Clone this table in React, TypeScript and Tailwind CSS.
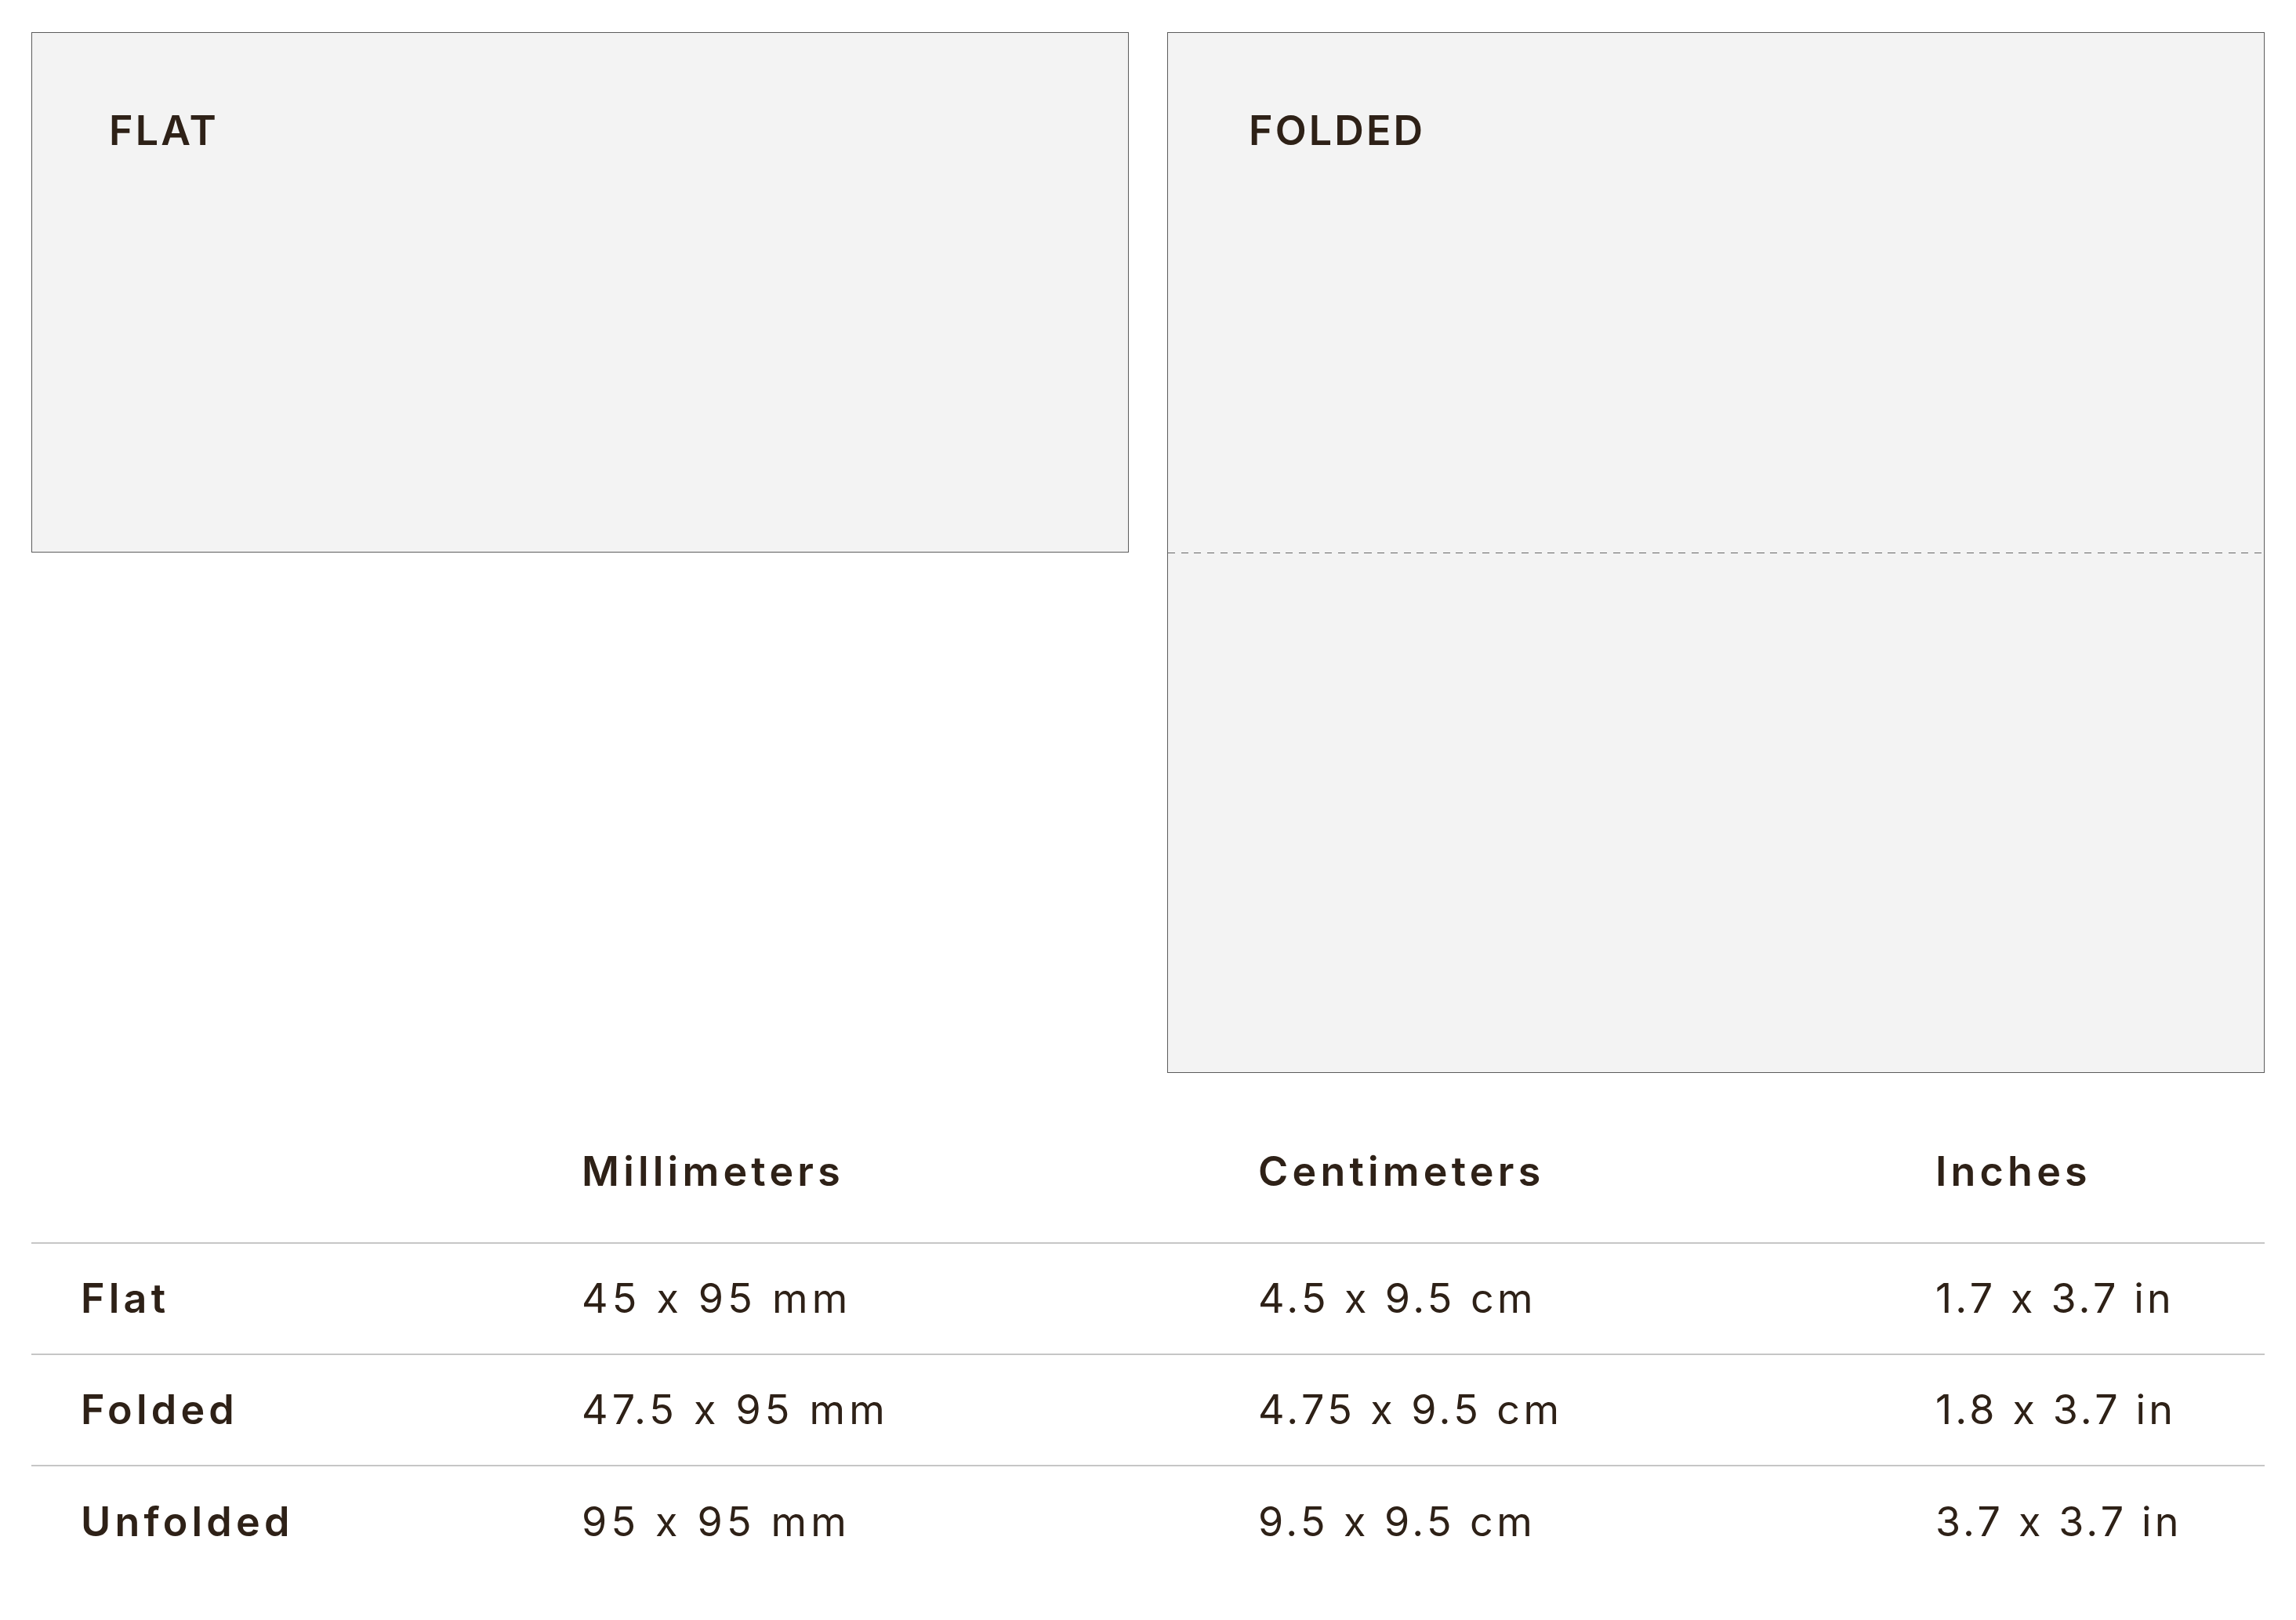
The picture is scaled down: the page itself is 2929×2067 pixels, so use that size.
const rows = [
  { label: "Flat", mm: "45 x 95 mm", cm: "4.5 x 9.5 cm", inch: "1.7 x 3.7 in" },
  { label: "Folded", mm: "47.5 x 95 mm", cm: "4.75 x 9.5 cm", inch: "1.8 x 3.7 in" },
  { label: "Unfolded", mm: "95 x 95 mm", cm: "9.5 x 9.5 cm", inch: "3.7 x 3.7 in" },
]

const cols = "grid grid-cols-[639px_863px_864px_1fr]"

export default function App() {
  return (
    <div className="min-h-screen bg-white px-[40px] pt-[41px] text-[#2e2117] [font-family:Inter,'Noto_Sans',sans-serif]">
      <div className="grid grid-cols-2 items-start gap-[49px]">
        <div className="h-[664px] border border-[#5c5c5c] bg-[#f3f3f3] px-[98px] pt-[99px]">
          <h2 className="text-[52px] font-semibold leading-none tracking-[0.06em]">FLAT</h2>
        </div>
        <div className="flex h-[1328px] flex-col border border-[#5c5c5c] bg-[#f3f3f3]">
          <div className="h-[663px] px-[103px] pt-[99px]">
            <h2 className="text-[52px] font-semibold leading-none tracking-[0.06em]">FOLDED</h2>
          </div>
          {/* fold line */}
          <div className="h-px bg-[repeating-linear-gradient(to_right,#666_0_9px,transparent_9px_16.7px)]" />
        </div>
      </div>

      <div>
        <div className={`${cols} border-b-2 border-[#c6c6c6] pt-[87px] pb-[51px]`}>
          <div />
          <div className="px-[63px] text-[52px] font-semibold leading-[78px] tracking-[0.1em]">Millimeters</div>
          <div className="px-[63px] text-[52px] font-semibold leading-[78px] tracking-[0.1em]">Centimeters</div>
          <div className="px-[63px] text-[52px] font-semibold leading-[78px] tracking-[0.1em]">Inches</div>
        </div>
        {rows.map((r, i) => (
          <div
            key={r.label}
            className={`${cols} h-[142px] items-center ${i < rows.length - 1 ? "border-b-2 border-[#c6c6c6]" : ""}`}
          >
            <div className="px-[63px] text-[52px] font-semibold tracking-[0.1em]">{r.label}</div>
            <div className="px-[63px] text-[52px] tracking-[0.1em]">{r.mm}</div>
            <div className="px-[63px] text-[52px] tracking-[0.085em]">{r.cm}</div>
            <div className="px-[63px] text-[52px] tracking-[0.08em]">{r.inch}</div>
          </div>
        ))}
      </div>
    </div>
  )
}
